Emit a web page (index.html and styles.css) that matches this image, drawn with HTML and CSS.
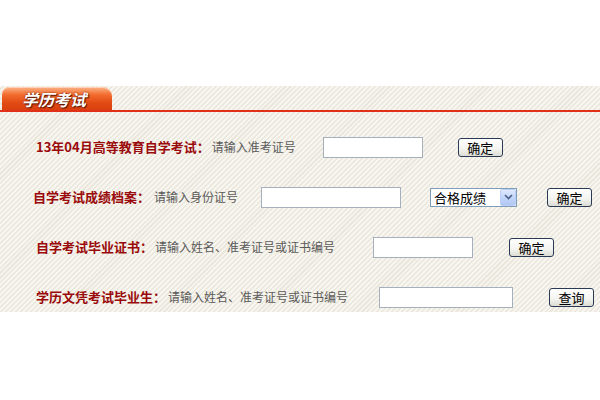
FILE: index.html
```html
<!DOCTYPE html>
<html lang="zh-CN">
<head>
<meta charset="utf-8">
<title>学历考试</title>
<link rel="stylesheet" href="styles.css">
</head>
<body>
<div class="spacer"></div>
<div class="panel">
  <div class="header">
    <div class="tab"><span class="tab-text">学历考试</span></div>
  </div>
  <div class="rows">
    <div class="row r1">
      <span class="label">13年04月高等教育自学考试：</span>
      <span class="hint">请输入准考证号</span>
      <input class="field f1" type="text">
      <span class="btn b1">确定</span>
    </div>
    <div class="row r2">
      <span class="label">自学考试成绩档案：</span>
      <span class="hint">请输入身份证号</span>
      <input class="field f2" type="text">
      <div class="select">
        <span class="select-text">合格成绩</span>
        <span class="select-arrow">
          <svg width="9" height="6" viewBox="0 0 9 6"><path d="M1 1 L4.5 4.5 L8 1" fill="none" stroke="#4d6185" stroke-width="1.6"/></svg>
        </span>
      </div>
      <span class="btn b2">确定</span>
    </div>
    <div class="row r3">
      <span class="label">自学考试毕业证书：</span>
      <span class="hint">请输入姓名、准考证号或证书编号</span>
      <input class="field f3" type="text">
      <span class="btn b3">确定</span>
    </div>
    <div class="row r4">
      <span class="label">学历文凭考试毕业生：</span>
      <span class="hint">请输入姓名、准考证号或证书编号</span>
      <input class="field f4" type="text">
      <span class="btn b4">查询</span>
    </div>
  </div>
</div>
</body>
</html>
```
FILE: styles.css
```css
html, body {
  margin: 0;
  padding: 0;
  background: #ffffff;
  font-family: "Noto Sans CJK SC", "Liberation Sans", sans-serif;
}
.spacer {
  height: 86px;
}
.panel {
  width: 600px;
  height: 226px;
  overflow: hidden;
  background-color: #f5f2eb;
  background-image: repeating-linear-gradient(135deg, #f7f5ef 0px, #f7f5ef 2px, #ebe7dc 2px, #ebe7dc 3.5px);
}
.header {
  height: 24px;
  border-bottom: 2px solid #e0301a;
  display: flex;
  align-items: flex-end;
}
.tab {
  width: 110px;
  height: 23px;
  margin-left: 2px;
  border-radius: 7px 9px 0 0;
  background: linear-gradient(to bottom, #fbb388 0%, #f26a2c 35%, #e24a14 70%, #d8400e 100%);
  box-shadow: inset 0 1px 0 #ffd2b5;
  display: flex;
  align-items: center;
}
.tab-text {
  margin-left: 20px;
  color: #ffffff;
  font-size: 16px;
  font-weight: bold;
  font-style: italic;
  line-height: 20px;
  text-shadow: 1px 1px 1px #5a1500, 0 0 2px #7a2000;
}
.rows {
  display: flex;
  flex-direction: column;
  gap: 30px;
  padding-top: 25px;
}
.row {
  height: 20px;
  display: flex;
  align-items: center;
}
.label {
  color: #9a0b0b;
  font-size: 13px;
  font-weight: bold;
  line-height: 20px;
  white-space: nowrap;
}
.hint {
  color: #5a5a5a;
  font-size: 12px;
  line-height: 20px;
  white-space: nowrap;
}
.field {
  box-sizing: border-box;
  height: 21px;
  margin: 0;
  padding: 0 2px;
  border: 1px solid #a6b0bc;
  background: #ffffff;
  outline: none;
}
.btn {
  box-sizing: border-box;
  height: 19px;
  width: 45px;
  border: 1px solid #2a3a55;
  border-radius: 3px;
  background: linear-gradient(to bottom, #ffffff 0%, #f3f3ef 60%, #dcdcd4 100%);
  color: #000000;
  font-size: 13px;
  line-height: 17px;
  text-align: center;
}
.r1 .label { margin-left: 36px; }
.r1 .hint { margin-left: 2px; }
.f1 { width: 100px; margin-left: 27px; }
.b1 { margin-left: 35px; }

.r2 .label { margin-left: 33px; }
.r2 .hint { margin-left: 4px; }
.f2 { width: 140px; margin-left: 23px; }
.select {
  box-sizing: border-box;
  width: 87px;
  height: 19px;
  margin-left: 29px;
  border: 1px solid #7f9db9;
  background: #ffffff;
  display: flex;
  align-items: center;
  justify-content: space-between;
}
.select-text {
  margin-left: 3px;
  font-size: 13px;
  color: #000000;
  line-height: 17px;
}
.select-arrow {
  box-sizing: border-box;
  width: 16px;
  height: 17px;
  border: 1px solid #bcd0f6;
  border-radius: 2px;
  background: linear-gradient(to bottom, #dfe9fd 0%, #c3d5fb 50%, #b2c7f3 100%);
  display: flex;
  align-items: center;
  justify-content: center;
}
.b2 { margin-left: 30px; }

.r3 .label { margin-left: 36px; }
.r3 .hint { margin-left: 2px; }
.f3 { width: 100px; margin-left: 38px; }
.b3 { margin-left: 36px; }

.r4 .label { margin-left: 36px; }
.r4 .hint { margin-left: 2px; }
.f4 { width: 134px; margin-left: 31px; }
.b4 { margin-left: 36px; }
```
